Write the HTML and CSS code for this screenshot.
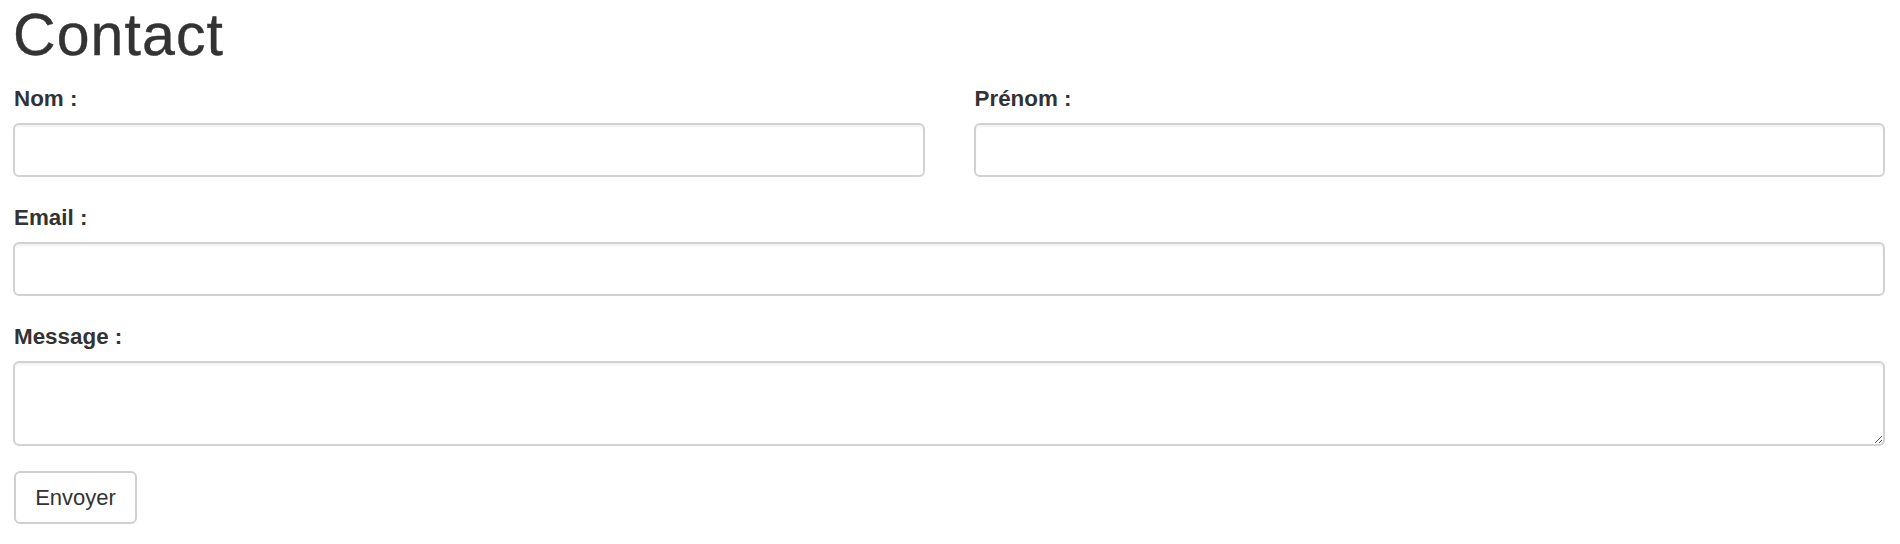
FILE: index.html
```html
<!DOCTYPE html>
<html lang="fr">
<head>
<meta charset="utf-8">
<title>Contact</title>
<link rel="stylesheet" href="styles.css">
</head>
<body>
<div class="page">
  <h1 class="title">Contact</h1>
  <form class="form">
    <div class="row">
      <div class="group">
        <label class="label" for="nom">Nom :</label>
        <input class="control" type="text" id="nom">
      </div>
      <div class="group">
        <label class="label" for="prenom">Prénom :</label>
        <input class="control" type="text" id="prenom">
      </div>
    </div>
    <div class="group">
      <label class="label" for="email">Email :</label>
      <input class="control" type="email" id="email">
    </div>
    <div class="group">
      <label class="label" for="message">Message :</label>
      <textarea class="control area" id="message"></textarea>
    </div>
    <button class="btn" type="button">Envoyer</button>
  </form>
</div>
</body>
</html>
```
FILE: styles.css
```css
html, body {
  margin: 0;
  padding: 0;
  background: #fff;
}
body {
  font-family: "Liberation Sans", Arial, Helvetica, sans-serif;
  color: #333;
}
.page {
  padding: 4px 15px 0 13px;
}
.title {
  margin: 0 0 16px 0;
  font-size: 59px;
  line-height: 63px;
  font-weight: 400;
  letter-spacing: 1.1px;
  color: #333;
  -webkit-text-stroke: 0.4px #333;
}
.form {
  display: flex;
  flex-direction: column;
}
.row {
  display: grid;
  grid-template-columns: 1fr 1fr;
  column-gap: 49px;
}
.group {
  display: flex;
  flex-direction: column;
  margin-bottom: 25px;
}
.label {
  font-size: 22.4px;
  line-height: 32px;
  font-weight: 700;
  margin-bottom: 8px;
  padding-left: 1px;
}
.control {
  box-sizing: border-box;
  width: 100%;
  height: 54px;
  margin: 0;
  border: 2px solid #d2d2d2;
  border-radius: 6px;
  box-shadow: inset 0 2px 2px rgba(0, 0, 0, 0.05);
  background: #fff;
  font-family: inherit;
  font-size: 22px;
  padding: 10px 19px;
  outline: none;
}
.area {
  height: 85px;
  resize: vertical;
}
.btn {
  align-self: flex-start;
  box-sizing: border-box;
  height: 53px;
  width: 123px;
  margin: 0 0 0 1px;
  border: 2px solid #d0d0d0;
  border-radius: 6px;
  background: #fff;
  color: #333;
  font-family: inherit;
  font-size: 22px;
  padding: 0;
}
```
